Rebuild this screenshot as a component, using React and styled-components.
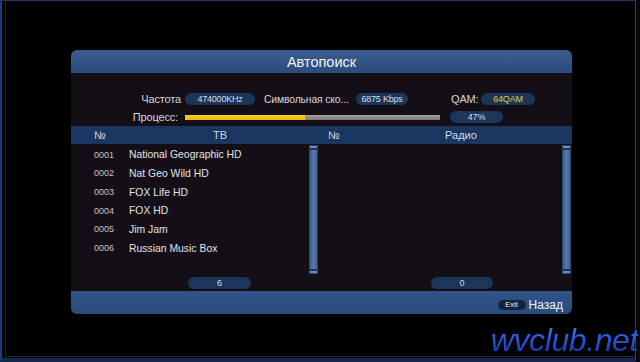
import React from "react"
import styled, { createGlobalStyle } from "styled-components"

const Global = createGlobalStyle`
  html, body {
    margin: 0;
    padding: 0;
    background: #05070c;
    width: 640px;
    height: 362px;
    overflow: hidden;
  }
  * { box-sizing: border-box; }
`

const Screen = styled.div`
  position: relative;
  width: 636px;
  height: 362px;
  background: #000;
  border-top: 1px solid #1c3566;
  border-left: 2px solid #1d3b78;
  border-right: 1px solid #2a4068;
  border-bottom: 4px solid #14264a;
  box-shadow: inset 3px -1px 0 #000, inset 4px -2px 0 #1b2740;
  padding: 49px 0 0 69px;
  font-family: "Liberation Sans", Arial, sans-serif;
`

const Dialog = styled.div`
  width: 501px;
  height: 264px;
  border-radius: 6px;
  overflow: hidden;
  background: #140f17;
  display: flex;
  flex-direction: column;
`

const TitleBar = styled.div`
  height: 23px;
  background: linear-gradient(#3a5d91, #2b4b7c);
  color: #f2f4f8;
  font-size: 14.5px;
  display: flex;
  align-items: center;
  justify-content: center;
`

const Info = styled.div`
  height: 53px;
  padding-top: 20px;
  display: flex;
  flex-direction: column;
  gap: 6px;
`

const InfoRow = styled.div`
  display: flex;
  align-items: center;
  height: 12px;
`

const Label = styled.span`
  width: ${p => p.$w}px;
  margin-left: ${p => p.$ml || 0}px;
  text-align: ${p => p.$right ? "right" : "left"};
  color: #d6d6d8;
  font-size: ${p => p.$fs || 11}px;
  letter-spacing: -0.15px;
  white-space: nowrap;
`

const Pill = styled.span`
  width: ${p => p.$w}px;
  margin-left: ${p => p.$ml || 0}px;
  height: 12px;
  border-radius: 6px;
  background: #1c3659;
  color: ${p => p.$gold ? "#e5c53a" : "#d8dee8"};
  font-size: 9px;
  letter-spacing: -0.2px;
  display: flex;
  align-items: center;
  justify-content: center;
`

const Progress = styled.div`
  width: 255px;
  height: 5px;
  margin-left: 7px;
  background: linear-gradient(#a0a0a0, #7c7c7c);
  display: flex;
`

const ProgressFill = styled.div`
  height: 100%;
  background: linear-gradient(#f6d22a, #e9b80e);
`

const Panels = styled.div`
  display: grid;
  grid-template-columns: 248px 253px;
`

const HeadBand = styled.div`
  height: 18px;
  background: #18365f;
  color: #d2d8e2;
  font-size: 11px;
  display: flex;
  align-items: center;
  padding-left: ${p => p.$pl}px;
`

const Cell = styled.span`
  width: ${p => p.$w}px;
  text-align: ${p => p.$center ? "center" : "left"};
`

const Panel = styled.div`
  display: flex;
  flex-direction: column;
  padding-right: 1px;
`

const ListArea = styled.div`
  height: 130px;
  display: flex;
`

const List = styled.div`
  flex: 1;
  padding-top: 1.4px;
  padding-left: 23px;
`

const Row = styled.div`
  height: 18.7px;
  display: flex;
  align-items: center;
`

const Num = styled.span`
  width: 35px;
  color: #c4c4c8;
  font-size: 9px;
`

const Name = styled.span`
  color: #e2e2e4;
  font-size: 10.4px;
`

const Scrollbar = styled.div`
  width: 9px;
  margin-top: 1px;
  background: linear-gradient(90deg, #3e6090, #547aa8 50%, #42669a);
  border: 1px solid #2a4470;
  box-shadow: inset 0 2px 0 #6a8cb8, inset 0 4px 0 #1c3258, inset 0 -2px 0 #6a8cb8, inset 0 -4px 0 #1c3258;
`

const CountRow = styled.div`
  height: 17px;
  padding-top: 3px;
  display: flex;
`

const Footer = styled.div`
  height: 23px;
  margin-top: auto;
  background: linear-gradient(#32548a, #2a4a7b);
  display: flex;
  align-items: center;
  justify-content: flex-end;
  padding: 4px 9px 0 0;
  gap: 3px;
`

const Key = styled.span`
  width: 28px;
  height: 10px;
  border-radius: 5px;
  background: #16243f;
  color: #e8ecf2;
  font-size: 7.5px;
  display: flex;
  align-items: center;
  justify-content: center;
`

const FooterText = styled.span`
  color: #f0f2f6;
  font-size: 12px;
`

const Watermark = styled.div`
  position: absolute;
  right: -3px;
  bottom: 2px;
  font-size: 32px;
  font-style: italic;
  font-weight: 300;
  letter-spacing: -0.4px;
  line-height: 1;
  background: linear-gradient(#3f78f0, #2352d8 55%, #1636a8);
  -webkit-background-clip: text;
  background-clip: text;
  color: transparent;
`

const channels = [
  ["0001", "National Geographic HD"],
  ["0002", "Nat Geo Wild HD"],
  ["0003", "FOX Life HD"],
  ["0004", "FOX HD"],
  ["0005", "Jim Jam"],
  ["0006", "Russian Music Box"],
]

const progress = 47

export default function App() {
  return (
    <>
      <Global />
      <Screen>
        <Dialog>
          <TitleBar>Автопоиск</TitleBar>
          <Info>
            <InfoRow>
              <Label $w={110} $right>Частота</Label>
              <Pill $w={70} $ml={4}>474000KHz</Pill>
              <Label $w={86} $ml={9} $fs={10.4}>Символьная ско...</Label>
              <Pill $w={52} $ml={6}>6875 Kbps</Pill>
              <Label $w={28} $ml={43}>QAM:</Label>
              <Pill $w={54} $ml={2} $gold>64QAM</Pill>
            </InfoRow>
            <InfoRow>
              <Label $w={107} $right>Процесс:</Label>
              <Progress>
                <ProgressFill style={{ width: `${progress}%` }} />
              </Progress>
              <Pill $w={53} $ml={10}>{progress}%</Pill>
            </InfoRow>
          </Info>
          <Panels>
            <HeadBand $pl={23}>
              <Cell $w={30}>№</Cell>
              <Cell $w={192} $center>ТВ</Cell>
            </HeadBand>
            <HeadBand $pl={9}>
              <Cell $w={30}>№</Cell>
              <Cell $w={206} $center>Радио</Cell>
            </HeadBand>
            <Panel>
              <ListArea>
                <List>
                  {channels.map(([n, name]) => (
                    <Row key={n}>
                      <Num>{n}</Num>
                      <Name>{name}</Name>
                    </Row>
                  ))}
                </List>
                <Scrollbar />
              </ListArea>
              <CountRow>
                <Pill $w={63} $ml={117}>6</Pill>
              </CountRow>
            </Panel>
            <Panel>
              <ListArea>
                <List />
                <Scrollbar />
              </ListArea>
              <CountRow>
                <Pill $w={62} $ml={112}>0</Pill>
              </CountRow>
            </Panel>
          </Panels>
          <Footer>
            <Key>Exit</Key>
            <FooterText>Назад</FooterText>
          </Footer>
        </Dialog>
        <Watermark>wvclub.net</Watermark>
      </Screen>
    </>
  )
}
